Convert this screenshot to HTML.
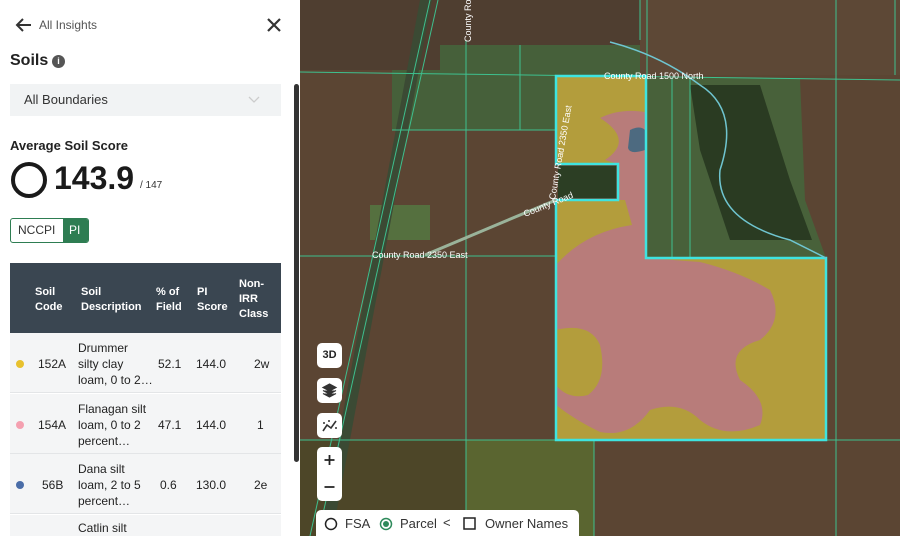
<!DOCTYPE html>
<html><head><meta charset="utf-8"><style>
*{margin:0;padding:0;box-sizing:border-box}
html,body{width:900px;height:536px;overflow:hidden}
body{font-family:"Liberation Sans",Arial,sans-serif;position:relative;background:#5a4634}
#side{position:absolute;left:0;top:0;width:300px;height:536px;background:#fff;overflow:hidden}
.t{position:absolute;white-space:nowrap}
.row{position:absolute;left:0;width:271px;height:60px;background:#f4f5f6;border-bottom:1px solid #e3e5e7;font-size:12px;color:#222}
.row div{position:absolute}
.btn{position:absolute;left:317px;width:25px;height:25px;background:#fff;border-radius:5px}
</style></head><body>
<svg style="position:absolute;left:300px;top:0" width="600" height="536" viewBox="300 0 600 536">
<rect x="300" y="0" width="600" height="536" fill="#5b4533"/>
<rect x="300" y="0" width="340" height="70" fill="#4f3e30"/>
<rect x="640" y="0" width="260" height="75" fill="#5d4836"/>
<path d="M440 45 L640 45 L640 75 L556 75 L556 130 L392 130 L392 70 L440 70Z" fill="#46603a"/>
<path d="M646 78 L800 78 L805 200 L826 258 L646 258 Z" fill="#48613a"/>
<path d="M690 85 L760 85 L790 180 L812 240 L730 240 L700 150 Z" fill="#2a3b22"/>
<rect x="370" y="205" width="60" height="35" fill="#55703f"/>
<rect x="466" y="440" width="128" height="96" fill="#5a6530"/>
<rect x="300" y="440" width="166" height="96" fill="#4d4628"/>
<path d="M320 536 L420 0 L432 0 L332 536Z" fill="#3b4a34"/>
<path d="M556 76 L646 76 L646 258 L826 258 L826 440 L556 440 L556 200 L618 200 L618 164 L556 164 Z" fill="#b39d3c"/>
<path d="M600 118 Q620 108 645 112 L646 258 L700 262 Q740 272 770 290 Q785 320 760 340 Q725 350 740 380 Q770 400 760 425 Q725 440 700 420 Q680 400 650 410 Q630 438 600 432 Q575 420 556 405 L556 265 Q585 232 632 225 L625 200 L618 200 L618 164 L605 160 Q635 140 600 118Z" fill="#b87c7a"/>
<path d="M556 330 Q590 322 600 345 Q608 380 588 395 Q568 400 556 385Z" fill="#b39d3c"/>
<path d="M630 130 Q640 125 645 130 L645 150 Q630 155 628 148Z" fill="#4d6a80"/>
<rect x="558" y="166" width="58" height="32" fill="#2c3e24"/>
<g stroke="#3ec08e" stroke-width="1" fill="none">
<line x1="300" y1="72" x2="900" y2="80"/><line x1="300" y1="256" x2="556" y2="256"/>
<line x1="466" y1="40" x2="466" y2="536"/><line x1="392" y1="130" x2="556" y2="130"/>
<line x1="640" y1="0" x2="640" y2="40"/><line x1="647" y1="0" x2="647" y2="76"/>
<line x1="836" y1="0" x2="836" y2="536"/><line x1="895" y1="0" x2="895" y2="75"/>
<line x1="300" y1="440" x2="900" y2="440"/><line x1="594" y1="440" x2="594" y2="536"/>
<line x1="310" y1="536" x2="430" y2="0"/><line x1="318" y1="536" x2="438" y2="0"/>
<line x1="520" y1="45" x2="520" y2="130"/><line x1="672" y1="78" x2="672" y2="258"/><line x1="690" y1="78" x2="690" y2="258"/>
</g>
<path d="M556 76 L646 76 L646 258 L826 258 L826 440 L556 440 L556 200 L618 200 L618 164 L556 164 Z" fill="none" stroke="#3ee4e0" stroke-width="2.5"/>
<path d="M425 255 L520 215 L556 200" stroke="#9ab39a" stroke-width="3" fill="none"/>
<path d="M610 42 Q660 55 700 85 Q740 110 720 170 Q715 220 790 240 L826 258" stroke="#6fc5d0" stroke-width="1.5" fill="none"/>
<g font-size="9" fill="#fff" font-family="Liberation Sans">
<text x="604" y="79">County Road 1500 North</text>
<text x="372" y="258">County Road 2350 East</text>
<text transform="translate(525,217) rotate(-22)">County Road</text>
<text transform="translate(555,200) rotate(-80)">County Road 2350 East</text>
<text transform="translate(471,42) rotate(-90)">County Ro</text>
</g>
</svg>
<div class="btn" style="top:343px;font-size:11px;font-weight:bold;text-align:center;line-height:25px;color:#222">3D</div>
<div class="btn" style="top:378px"><svg width="25" height="25"><path d="M12.5 6 L19 9.5 L12.5 13 L6 9.5Z M6 12.5 L12.5 16 L19 12.5 M6 15.5 L12.5 19 L19 15.5" fill="#333" stroke="#333" stroke-width="1.2"/></svg></div>
<div class="btn" style="top:413px"><svg width="25" height="25"><path d="M6 18 L10 12 L14 15 L19 8" fill="none" stroke="#333" stroke-width="1.6"/><circle cx="7" cy="10" r="1" fill="#333"/><circle cx="12" cy="8" r="1" fill="#333"/><circle cx="19" cy="15" r="1" fill="#333"/></svg></div>
<div class="btn" style="top:447px;height:54px"><svg width="25" height="54"><path d="M12.5 8v10M7.5 13h10M7.5 40h10" stroke="#222" stroke-width="1.8"/></svg></div>
<div style="position:absolute;left:316px;top:510px;width:263px;height:26px;background:#fff;border-radius:5px 5px 0 0;font-size:13px;color:#333;overflow:hidden">
<svg style="position:absolute;left:8px;top:7px" width="14" height="14"><circle cx="7" cy="7" r="5.5" fill="none" stroke="#222" stroke-width="1.5"/></svg>
<span class="t" style="left:29px;top:6px">FSA</span>
<svg style="position:absolute;left:63px;top:7px" width="14" height="14"><circle cx="7" cy="7" r="5.5" fill="none" stroke="#2e8a5b" stroke-width="1.5"/><circle cx="7" cy="7" r="3" fill="#2e8a5b"/></svg>
<span class="t" style="left:84px;top:6px">Parcel</span>
<span class="t" style="left:127px;top:5px">&lt;</span>
<svg style="position:absolute;left:147px;top:7px" width="14" height="14"><rect x="1" y="1" width="11" height="11" fill="none" stroke="#222" stroke-width="1.5"/></svg>
<span class="t" style="left:169px;top:6px">Owner Names</span>
</div>
<div id="side">
<svg style="position:absolute;left:15px;top:17px" width="18" height="16"><path d="M2 8h14M8 2L2 8l6 6" fill="none" stroke="#333" stroke-width="2"/></svg>
<span class="t" style="left:39px;top:18px;font-size:12px;color:#555">All Insights</span>
<svg style="position:absolute;left:267px;top:18px" width="14" height="14"><path d="M1 1l12 12M13 1L1 13" stroke="#333" stroke-width="2.2"/></svg>
<span class="t" style="left:10px;top:52px;font-size:16px;font-weight:bold;color:#222">Soils</span>
<div style="position:absolute;left:52px;top:55px;width:13px;height:13px;border-radius:50%;background:#555;color:#fff;font-size:9px;font-weight:bold;text-align:center;line-height:13px">i</div>
<div style="position:absolute;left:10px;top:84px;width:271px;height:32px;background:#f1f3f4"></div>
<span class="t" style="left:24px;top:92px;font-size:13px;color:#333">All Boundaries</span>
<svg style="position:absolute;left:248px;top:96px" width="12" height="8"><path d="M1 1l5 5 5-5" fill="none" stroke="#ccc" stroke-width="1.3"/></svg>
<span class="t" style="left:10px;top:138px;font-size:13px;font-weight:bold;color:#222">Average Soil Score</span>
<svg style="position:absolute;left:10px;top:161px" width="38" height="38"><circle cx="19" cy="19" r="16" fill="none" stroke="#1a1a1a" stroke-width="4"/></svg>
<span class="t" style="left:54px;top:160px;font-size:32px;font-weight:bold;color:#1a1a1a">143.9</span>
<span class="t" style="left:140px;top:180px;font-size:10px;color:#333">/ 147</span>
<div style="position:absolute;left:10px;top:218px;width:79px;height:25px;border:1.5px solid #2e7d52;border-radius:3px;overflow:hidden">
<span class="t" style="left:7px;top:4px;font-size:12px;color:#333">NCCPI</span>
<div style="position:absolute;left:52px;top:0;width:27px;height:25px;background:#2e7d52;color:#fff;font-size:12px;padding:4px 0 0 6px">PI</div></div>
<div style="position:absolute;left:10px;top:263px;width:271px;height:70px;background:#3a4651;color:#fff;font-size:11px;font-weight:bold;line-height:15px">
<div class="t" style="left:25px;top:22px">Soil<br>Code</div>
<div class="t" style="left:71px;top:22px">Soil<br>Description</div>
<div class="t" style="left:146px;top:22px">% of<br>Field</div>
<div class="t" style="left:187px;top:22px">PI<br>Score</div>
<div class="t" style="left:229px;top:14px">Non-<br>IRR<br>Class</div></div>
<div style="position:absolute;left:10px;top:333px;width:271px;height:203px;overflow:hidden;font-size:11px;color:#222;line-height:16px">
<div class="row" style="top:0"><div style="left:6px;top:27px;width:8px;height:8px;border-radius:50%;background:#e8c12e"></div><div style="left:28px;top:23px">152A</div><div style="left:68px;top:7px">Drummer<br>silty clay<br>loam, 0 to 2…</div><div style="left:148px;top:23px">52.1</div><div style="left:186px;top:23px">144.0</div><div style="left:244px;top:23px">2w</div></div>
<div class="row" style="top:61px"><div style="left:6px;top:27px;width:8px;height:8px;border-radius:50%;background:#f4a0b0"></div><div style="left:28px;top:23px">154A</div><div style="left:68px;top:7px">Flanagan silt<br>loam, 0 to 2<br>percent…</div><div style="left:148px;top:23px">47.1</div><div style="left:186px;top:23px">144.0</div><div style="left:247px;top:23px">1</div></div>
<div class="row" style="top:121px"><div style="left:6px;top:27px;width:8px;height:8px;border-radius:50%;background:#4a6da8"></div><div style="left:32px;top:23px">56B</div><div style="left:68px;top:7px">Dana silt<br>loam, 2 to 5<br>percent…</div><div style="left:150px;top:23px">0.6</div><div style="left:186px;top:23px">130.0</div><div style="left:244px;top:23px">2e</div></div>
<div class="row" style="top:182px;height:21px;border:none"><div style="left:68px;top:5px">Catlin silt</div></div>
</div>
<div style="position:absolute;left:294px;top:84px;width:5px;height:378px;background:#333;border-radius:3px"></div>
</div>
</body></html>
